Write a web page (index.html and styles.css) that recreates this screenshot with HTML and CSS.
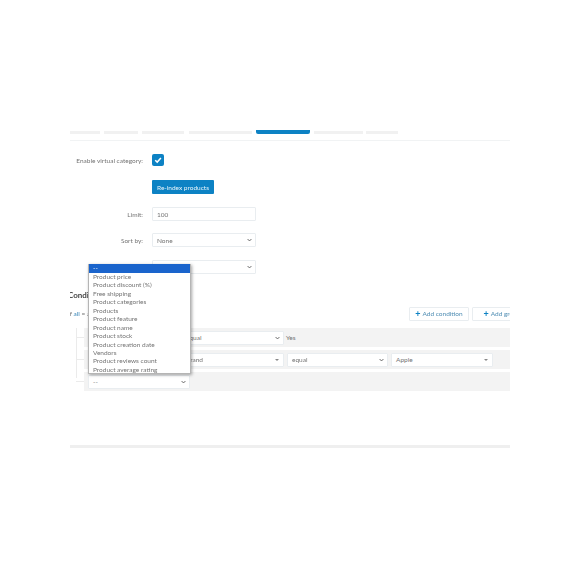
FILE: index.html
```html
<!DOCTYPE html>
<html lang="en">
<head>
<meta charset="utf-8">
<title>Virtual category</title>
<link rel="stylesheet" href="styles.css">
</head>
<body>
<main class="panel">
  <nav class="tabs">
    <span class="tab t1"></span>
    <span class="tab t2"></span>
    <span class="tab t3"></span>
    <span class="tab t4"></span>
    <span class="tab t5 active"></span>
    <span class="tab t6"></span>
    <span class="tab t7"></span>
  </nav>
  <form class="form">
    <div class="row row-check">
      <label class="label">Enable virtual category:</label>
      <span class="checkbox"><svg viewBox="0 0 12 12" width="12" height="12"><path d="M3.2 6.2 5.2 8.1 8.9 4" fill="none" stroke="#fff" stroke-width="1.5"/></svg></span>
    </div>
    <div class="row row-btn">
      <span class="label"></span>
      <button type="button" class="primary">Re-index products</button>
    </div>
    <div class="row row-limit">
      <label class="label">Limit:</label>
      <div class="field">100</div>
    </div>
    <div class="row row-sort">
      <label class="label">Sort by:</label>
      <div class="field select">None<svg class="chev" viewBox="0 0 8 6" width="5" height="4"><path d="M1 1.5 4 4.5 7 1.5" fill="none" stroke="#666" stroke-width="1.6"/></svg></div>
    </div>
    <div class="row row-third">
      <span class="label"></span>
      <div class="field select"><svg class="chev" viewBox="0 0 8 6" width="5" height="4"><path d="M1 1.5 4 4.5 7 1.5" fill="none" stroke="#666" stroke-width="1.6"/></svg></div>
    </div>
  </form>
  <section class="conditions">
    <h2 class="title">Conditions</h2>
    <div class="toolbar">
      <a class="iflink">If <span class="link-all">all</span> = <span class="muted">are true</span></a>
      <div class="actions">
        <button type="button" class="ghost"><b class="plus">+</b> Add condition</button>
        <button type="button" class="ghost"><b class="plus">+</b> Add group</button>
      </div>
    </div>
    <div class="tree">
      <div class="cond">
        <div class="field sel-wide"><span class="sel-text">equal</span><svg class="chev" viewBox="0 0 8 6" width="5" height="4"><path d="M1 1.5 4 4.5 7 1.5" fill="none" stroke="#666" stroke-width="1.6"/></svg></div>
        <span class="value">Yes</span>
      </div>
      <div class="cond">
        <div class="field sel-wide"><span class="sel-text">Brand</span><i class="caret"></i></div>
        <div class="field sel-op">equal<svg class="chev" viewBox="0 0 8 6" width="5" height="4"><path d="M1 1.5 4 4.5 7 1.5" fill="none" stroke="#666" stroke-width="1.6"/></svg></div>
        <div class="field sel-val">Apple<i class="caret"></i></div>
      </div>
      <div class="cond">
        <div class="field sel-new">--<svg class="chev" viewBox="0 0 8 6" width="5" height="4"><path d="M1 1.5 4 4.5 7 1.5" fill="none" stroke="#666" stroke-width="1.6"/></svg></div>
      </div>
    </div>
  </section>
  <div class="footer-bar"></div>

  <ul class="menu">
    <li class="selected">--</li>
    <li>Product price</li>
    <li>Product discount (%)</li>
    <li>Free shipping</li>
    <li>Product categories</li>
    <li>Products</li>
    <li>Product feature</li>
    <li>Product name</li>
    <li>Product stock</li>
    <li>Product creation date</li>
    <li>Vendors</li>
    <li>Product reviews count</li>
    <li>Product average rating</li>
  </ul>
</main>
</body>
</html>
```

FILE: styles.css
```css
* { box-sizing: border-box; }
html, body { margin: 0; padding: 0; background: #fff; }
body {
  width: 580px;
  height: 580px;
  overflow: hidden;
  font-family: Lato, Roboto, "Liberation Sans", sans-serif;
  font-size: 6.5px;
  color: #747474;
}
.panel {
  position: relative;
  width: 440px;
  height: 450px;
  margin-left: 70px;
  padding-top: 130px;
  overflow: hidden;
  filter: blur(0.3px);
}
.tabs {
  display: flex;
  align-items: center;
  height: 4px;
  gap: 4px;
}
.tab { height: 3px; background: #f1f1f1; }
.t1 { width: 30px; }
.t2 { width: 34px; }
.t3 { width: 42px; }
.t4 { width: 63px; margin-left: 1px; }
.t5 { width: 54px; }
.t6 { width: 49px; }
.t7 { width: 32px; margin-left: -1px; }
.tab.active { height: 4px; background: #0d82c4; border-radius: 0 0 2px 2px; }
.form {
  margin-top: 6px;
  border-top: 1px solid #f1f3f4;
  padding-top: 13px;
}
.row { display: flex; align-items: center; gap: 9px; }
.label { width: 73px; text-align: right; color: #747474; }
.row-check { height: 12px; }
.row-btn { height: 14px; margin-top: 14px; }
.row-limit { height: 14px; margin-top: 13px; }
.row-sort { height: 14px; margin-top: 12px; }
.row-third { height: 14px; margin-top: 13px; }
.checkbox {
  width: 12px;
  height: 12px;
  background: #0d82c4;
  border-radius: 2px;
  display: flex;
}
.primary {
  width: 62px;
  height: 14px;
  padding: 0;
  border: 0;
  border-radius: 1px;
  background: #0d82c4;
  color: #e8f5fb;
  font: inherit;
}
.field {
  position: relative;
  display: flex;
  align-items: center;
  height: 14px;
  background: #fff;
  border: 1px solid #e9edf0;
  border-radius: 1px;
  padding-left: 4px;
  color: #747474;
}
.row .field { width: 104px; }
.chev { position: absolute; right: 3px; top: 4px; }
.caret {
  position: absolute;
  right: 4px;
  top: 5px;
  border: 2px solid transparent;
  border-top: 2px solid #888;
  border-bottom: 0;
}
.conditions { margin-top: 16px; }
.title {
  margin: 0 0 0 -2px;
  height: 10px;
  line-height: 10px;
  font-size: 8px;
  font-weight: 700;
  color: #444;
}
.toolbar {
  display: flex;
  justify-content: space-between;
  align-items: center;
  height: 15px;
  margin-top: 6px;
}
.iflink { margin-left: -2px; color: #747474; }
.link-all { color: #3a87b8; }
.muted { color: #777; }
.actions { display: flex; gap: 3px; margin-right: -22px; }
.ghost {
  display: flex;
  align-items: center;
  justify-content: center;
  gap: 2px;
  width: 60px;
  height: 14px;
  padding: 0;
  background: #fff;
  border: 1px solid #e9edf0;
  border-radius: 1px;
  color: #4f8db3;
  font: inherit;
  white-space: nowrap;
}
.plus { color: #0d82c4; font-size: 9px; line-height: 1; }
.tree {
  position: relative;
  margin: 7px 0 0 14px;
  display: flex;
  flex-direction: column;
  gap: 3px;
}
.tree::before {
  content: "";
  position: absolute;
  left: -8px;
  top: 0;
  bottom: 13px;
  width: 1px;
  background: #ebebeb;
}
.cond {
  position: relative;
  display: flex;
  align-items: center;
  gap: 3px;
  height: 19px;
  padding-left: 4px;
  background: #f3f3f3;
}
.cond::before {
  content: "";
  position: absolute;
  left: -8px;
  top: 9px;
  width: 8px;
  height: 1px;
  background: #ebebeb;
}
.sel-wide { width: 196px; }
.sel-text { margin-left: 93px; }
.sel-op { width: 101px; }
.sel-val { width: 102px; }
.value { color: #747474; margin-left: -1px; }
.sel-new { width: 102px; }
.footer-bar {
  position: absolute;
  left: 0;
  right: 0;
  top: 445px;
  height: 3px;
  background: #efefef;
}
.menu {
  position: absolute;
  left: 18px;
  top: 264px;
  width: 103px;
  height: 110px;
  margin: 0;
  padding: 0;
  list-style: none;
  background: #fff;
  border: 1px solid #b5b5b5;
  border-top: 0;
  box-shadow: 1px 1px 3px rgba(0,0,0,.35);
  overflow: hidden;
}
.menu li {
  height: 8.45px;
  line-height: 8.45px;
  padding-left: 4px;
  color: #747474;
  white-space: nowrap;
}
.menu li.selected { height: 9px; background: #1a64cc; color: #fff; }
```
